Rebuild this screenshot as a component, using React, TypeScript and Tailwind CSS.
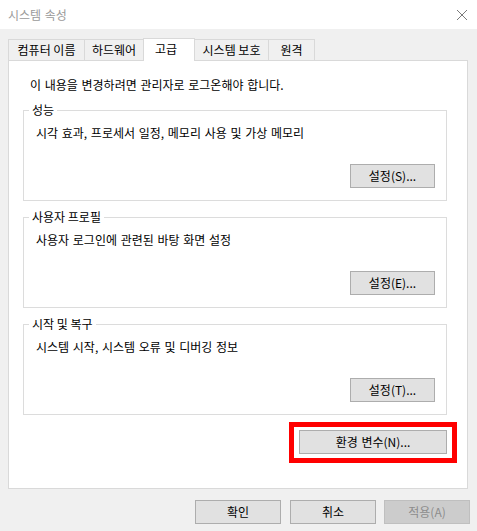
import React from "react";

function Tab({ label, w, active, first }: { label: string; w: string; active?: boolean; first?: boolean }) {
  if (active) {
    return (
      <div
        className={`${w} ${first ? "" : "-ml-px"} relative z-10 h-[23px] bg-white border-l border-t border-r border-[#d9d9d9] flex items-center justify-center pb-[2px] pr-[6px]`}
      >
        {label}
      </div>
    );
  }
  return (
    <div
      className={`${w} ${first ? "" : "-ml-px"} h-[22px] bg-[#f0f0f0] border border-[#d9d9d9] flex items-center justify-center`}
    >
      {label}
    </div>
  );
}

function Group({ title, desc, btn }: { title: string; desc: string; btn: string }) {
  return (
    <div className="relative ml-[14px] w-[424px] h-[91px] border border-[#dcdcdc] flex flex-col pt-[14px] pl-[12px] pr-[11px]">
      <span className="absolute left-[5px] -top-[9px] bg-white px-[3px] leading-[16px]">{title}</span>
      <div className="leading-[16px] whitespace-nowrap [word-spacing:1px]">{desc}</div>
      <button className="self-end mt-[23px] w-[85px] h-[24px] bg-[#e1e1e1] border border-[#adadad] flex items-center justify-center leading-[16px]">
        {btn}
      </button>
    </div>
  );
}

export default function App() {
  return (
    <div className="w-[477px] h-[531px] bg-[#f0f0f0] flex flex-col font-['Noto_Sans_CJK_KR',sans-serif] text-[12px] leading-[16px] text-black overflow-hidden">
      <div className="h-[29px] bg-white flex items-center justify-between pl-[8px] pr-[10px]">
        <span className="text-[#9a9a9a] [word-spacing:1px]">시스템 속성</span>
        <svg width="10" height="10" viewBox="0 0 10 10">
          <path d="M0 0 L10 10 M10 0 L0 10" stroke="#7a7a7a" strokeWidth="1" />
        </svg>
      </div>

      <div className="mt-[9px] pl-[8px] flex items-end relative z-10 -mb-px">
        <Tab label="컴퓨터 이름" w="w-[77px]" first />
        <Tab label="하드웨어" w="w-[60px]" />
        <Tab label="고급" w="w-[52px]" active />
        <Tab label="시스템 보호" w="w-[75px]" />
        <Tab label="원격" w="w-[47px]" />
      </div>

      <div className="ml-[8px] w-[460px] h-[429px] bg-white border border-[#d9d9d9] flex flex-col">
        <div className="pt-[16px] pl-[21px] leading-[16px] [word-spacing:1px]">이 내용을 변경하려면 관리자로 로그온해야 합니다.</div>
        <div className="mt-[17px] flex flex-col gap-[16px]">
          <Group title="성능" desc="시각 효과, 프로세서 일정, 메모리 사용 및 가상 메모리" btn="설정(S)..." />
          <Group title="사용자 프로필" desc="사용자 로그인에 관련된 바탕 화면 설정" btn="설정(E)..." />
          <Group title="시작 및 복구" desc="시스템 시작, 시스템 오류 및 디버깅 정보" btn="설정(T)..." />
        </div>
        <div className="self-end mr-[10px] mt-[7px] border-[5px] border-[#ff0000] px-[5px] pt-[3px] pb-[4px]">
          <button className="w-[148px] h-[24px] bg-[#e1e1e1] border border-[#adadad] flex items-center justify-center [word-spacing:1px]">
            환경 변수(N)...
          </button>
        </div>
      </div>

      <div className="mt-[11px] flex justify-end pr-[7px]">
        <button className="w-[86px] h-[24px] bg-[#e1e1e1] border border-[#adadad] flex items-center justify-center">확인</button>
        <button className="ml-[9px] w-[86px] h-[24px] bg-[#e1e1e1] border border-[#adadad] flex items-center justify-center">취소</button>
        <button className="ml-[8px] w-[86px] h-[24px] bg-[#cccccc] border border-[#bfbfbf] text-[#8c8c8c] flex items-center justify-center">적용(A)</button>
      </div>
    </div>
  );
}
